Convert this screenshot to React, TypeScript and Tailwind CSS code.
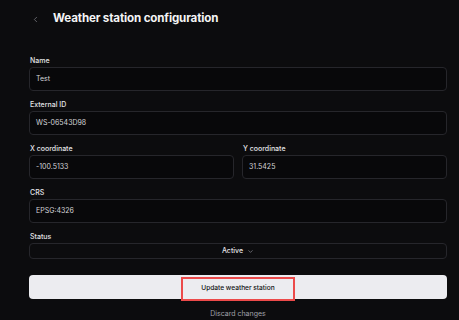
import React from 'react';
import { ChevronLeft, ChevronDown } from 'lucide-react';

const Field: React.FC<{ label: string; value: string }> = ({ label, value }) => (
  <div className="flex flex-col gap-[1px] min-w-0 flex-1">
    <label className="h-[11px] pl-[1px] text-[7px] leading-[11px] font-medium text-[#e4e4e7]">{label}</label>
    <div className="h-[24px] rounded-[4px] border border-[#26262b] bg-[#08080a] pl-[6px] flex items-center text-[7px] text-[#d4d4d8]">
      {value}
    </div>
  </div>
);

export default function App() {
  return (
    <div
      className="w-[459px] h-[320px] overflow-hidden bg-[#0c0c0e] text-white"
      style={{ fontFamily: 'Inter, "Noto Sans", sans-serif' }}
    >
      {/* Header */}
      <div className="h-[38px] flex items-center pl-[31px] gap-[13px]">
        <ChevronLeft className="w-[9px] h-[9px] text-[#a1a1aa]" strokeWidth={1.5} />
        <h1 className="text-[11.6px] font-bold tracking-[-0.15px] text-[#f4f4f5]">Weather station configuration</h1>
      </div>

      {/* Form */}
      <div className="pt-[17px] pl-[29px] pr-[12px] flex flex-col gap-[8px]">
        <Field label="Name" value="Test" />
        <Field label="External ID" value="WS-06543D98" />
        <div className="flex gap-[8px]">
          <Field label="X coordinate" value="-100.5133" />
          <Field label="Y coordinate" value="31.5425" />
        </div>
        <Field label="CRS" value="EPSG:4326" />
        <div className="flex flex-col gap-[1px]">
          <label className="h-[11px] pl-[1px] text-[7px] leading-[11px] font-medium text-[#e4e4e7]">Status</label>
          <div className="h-[16px] rounded-[4px] border border-[#26262b] flex items-center justify-center gap-[4px] text-[7px] font-medium text-[#e4e4e7]">
            Active
            <ChevronDown className="w-[7px] h-[7px] text-[#a1a1aa]" />
          </div>
        </div>

        {/* Actions */}
        <button className="mt-[8px] h-[24px] rounded-[4px] bg-[#ececf0] flex items-center justify-center">
          <span className="relative top-[2px] h-[24px] w-[114px] border-2 border-[#ec4a4a] flex items-center justify-center text-[6.6px] font-medium text-[#111113]">
            Update weather station
          </span>
        </button>
        <div className="h-[12px] mt-[1px] flex items-center justify-center text-[7px] text-[#a1a1aa]">
          Discard changes
        </div>
      </div>
    </div>
  );
}
